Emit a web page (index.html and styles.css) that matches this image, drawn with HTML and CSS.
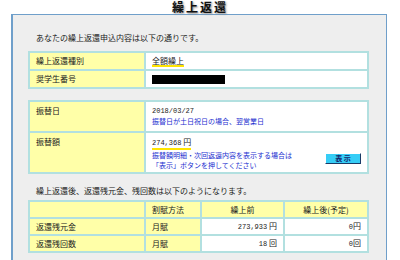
FILE: index.html
```html
<!DOCTYPE html>
<html lang="ja">

<head>
    <meta charset="UTF-8">
    <title>繰上返還</title>
    <link rel="stylesheet" href="styles.css">
</head>

<body>
    <h1 class="title">繰上返還</h1>
    <div class="panel">
        <p class="lead">あなたの繰上返還申込内容は以下の通りです。</p>
        <table class="tbl t1">
            <tr>
                <td class="lbl">繰上返還種別</td>
                <td class="val"><span class="mark">全額繰上</span></td>
            </tr>
            <tr>
                <td class="lbl">奨学生番号</td>
                <td class="val"><span class="black"></span></td>
            </tr>
        </table>

        <table class="tbl t2">
            <tr class="r1">
                <td class="lbl">振替日</td>
                <td class="val">
                    <div class="num">2018/03/27</div>
                    <div class="note">振替日が土日祝日の場合、翌営業日</div>
                </td>
            </tr>
            <tr class="r2">
                <td class="lbl">振替額</td>
                <td class="val">
                    <div><span class="mark"><span class="num">274,368</span> 円</span></div>
                    <div class="noterow">
                        <div class="note">振替額明細・次回返還内容を表示する場合は<br>「表示」ボタンを押してください</div>
                        <button class="btn">表 示</button>
                    </div>
                </td>
            </tr>
        </table>

        <p class="lead lead2">繰上返還後、返還残元金、残回数は以下のようになります。</p>
        <table class="tbl t3">
            <tr class="head">
                <td class="c1"></td>
                <td class="c2">割賦方法</td>
                <td class="c3 ctr">繰上前</td>
                <td class="c4 ctr">繰上後(予定)</td>
            </tr>
            <tr>
                <td class="lbl">返還残元金</td>
                <td class="lbl">月賦</td>
                <td class="amt"><span class="num">273,933</span> 円</td>
                <td class="amt"><span class="num">0</span>円</td>
            </tr>
            <tr>
                <td class="lbl">返還残回数</td>
                <td class="lbl">月賦</td>
                <td class="amt"><span class="num">18</span> 回</td>
                <td class="amt"><span class="num">0</span>回</td>
            </tr>
        </table>
    </div>
</body>

</html>
```

FILE: styles.css
```css
* {
    margin: 0;
    padding: 0;
    box-sizing: border-box;
}

body {
    width: 400px;
    height: 260px;
    overflow: hidden;
    background-color: #fff;
    font-family: "Noto Sans CJK JP", sans-serif;
    font-size: 8px;
    color: #222;
}

.title {
    height: 14px;
    font-size: 12px;
    line-height: 13px;
    font-weight: bold;
    text-align: center;
    letter-spacing: 2px;
    color: #111;
    text-shadow: 1px 1px 2px #888;
}

.panel {
    margin-left: 11px;
    width: 376px;
    height: 246px;
    background-color: #eeeeee;
    border: 1px solid #6f9fca;
    border-left-width: 2px;
    border-bottom: none;
    padding: 17px 16px 0 15px;
}

.lead {
    line-height: 12px;
    padding-left: 8px;
    margin-bottom: 7px;
}

.lead2 {
    margin-top: 11px;
    margin-bottom: 3px;
}

.tbl {
    width: 341px;
    border-collapse: collapse;
    border: 2px solid #7fcaca;
    table-layout: fixed;
}

.tbl td {
    border: 2px solid #b2e0e0;
    padding: 0 6px;
    background-color: #fff;
    line-height: 10px;
}

.tbl .lbl {
    background-color: #ffffa8;
    width: 116px;
}

.t1 tr {
    height: 18px;
}

.t2 {
    margin-top: 11px;
}

.t2 td {
    vertical-align: top;
    padding-top: 4px;
}

.t2 .r1 {
    height: 31px;
}

.t2 .r2 {
    height: 41px;
}

.mark {
    border-bottom: 2px solid #ffe400;
    line-height: 9px;
    display: inline-block;
}

.black {
    display: inline-block;
    width: 73px;
    height: 9px;
    background-color: #000;
    vertical-align: middle;
}

.num {
    font-family: "Liberation Mono", monospace;
    font-size: 7px;
}

.note {
    font-size: 7px;
    color: #1c2fd0;
    line-height: 10px;
}

.noterow {
    display: flex;
    justify-content: space-between;
    align-items: center;
}

.btn {
    width: 36px;
    height: 11px;
    margin-top: -3px;
    background-color: #36cdf6;
    border: 1px solid #fff;
    border-right-color: #1a3a66;
    border-bottom-color: #1a3a66;
    font-family: "Noto Sans CJK JP", sans-serif;
    font-size: 7px;
    line-height: 9px;
    font-weight: bold;
    color: #14246a;
}

.t3 tr {
    height: 17px;
}

.t3 .head td {
    background-color: #ffffa8;
}

.t3 .c1 {
    width: 116px;
}

.t3 .c2 {
    width: 56px;
}

.t3 .c3 {
    width: 83px;
}

.ctr {
    text-align: center;
}

.amt {
    text-align: right;
}
```
